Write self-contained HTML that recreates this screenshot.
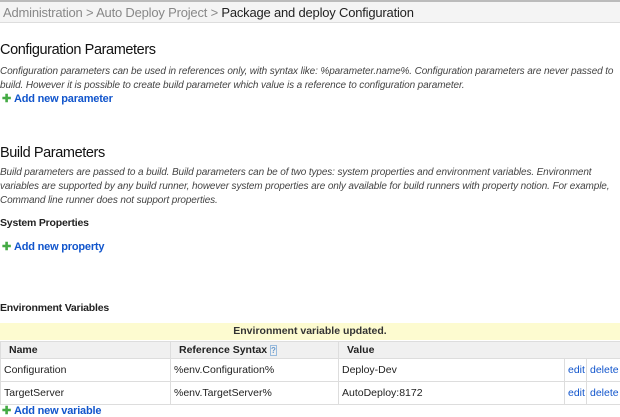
<!DOCTYPE html>
<html><head><style>
body{margin:0;width:620px;height:416px;overflow:hidden;background:#fff;font-family:"Liberation Sans",Arial,sans-serif;color:#222;position:relative}
.a{position:absolute;white-space:nowrap}
.bc{left:0;top:0;width:620px;height:23px;background:#f4f4f4;border-top:2px solid #bbb;border-bottom:1px solid #ddd;box-sizing:border-box}
.h{font-size:14.5px;letter-spacing:-0.4px;color:#111}
.i{font-size:10px;font-style:italic;color:#444;letter-spacing:-0.12px}
.add{font-size:11px;font-weight:bold;color:#1155cc;letter-spacing:-0.2px}
.add b{display:inline-block;color:#4a4;font-size:11px;margin-right:4px;width:8px}
.s{font-size:10.5px;font-weight:bold;color:#222;letter-spacing:-0.2px}
table{position:absolute;left:0;top:341px;width:620px;border-collapse:collapse;font-size:10.5px;table-layout:fixed}
td{border:1px solid #ddd;padding:0 3px;height:22px;overflow:hidden;white-space:nowrap}
tr.hd td{background:#f0f0f0;font-weight:bold;height:16px;padding-left:8px}
.l{color:#1155cc}
</style></head><body>
<div class="a bc"></div>
<div class="a" style="left:3px;top:5px;font-size:13px;letter-spacing:-0.2px;color:#888">Administration &gt; Auto Deploy Project &gt; <span style="color:#222">Package and deploy Configuration</span></div>
<div class="a h" style="left:0;top:42px">Configuration Parameters</div>
<div class="a i" style="left:0;top:66px">Configuration parameters can be used in references only, with syntax like: %parameter.name%. Configuration parameters are never passed to</div>
<div class="a i" style="left:0;top:80px">build. However it is possible to create build parameter which value is a reference to configuration parameter.</div>
<div class="a add" style="left:2px;top:92px"><b>✚</b>Add new parameter</div>
<div class="a h" style="left:0;top:145px">Build Parameters</div>
<div class="a i" style="left:0;top:167px">Build parameters are passed to a build. Build parameters can be of two types: system properties and environment variables. Environment</div>
<div class="a i" style="left:0;top:181px">variables are supported by any build runner, however system properties are only available for build runners with property notion. For example,</div>
<div class="a i" style="left:0;top:195px">Command line runner does not support properties.</div>
<div class="a s" style="left:0;top:217px">System Properties</div>
<div class="a add" style="left:2px;top:240px"><b>✚</b>Add new property</div>
<div class="a s" style="left:0;top:302px">Environment Variables</div>
<div class="a" style="left:0;top:323px;width:620px;height:17px;background:#fdfbd0;text-align:center;font-size:10.5px;font-weight:bold;line-height:17px;color:#333">Environment variable updated.</div>
<table>
<colgroup><col style="width:170px"><col style="width:168px"><col style="width:226px"><col style="width:22px"><col style="width:34px"></colgroup>
<tr class="hd"><td>Name</td><td>Reference Syntax <span style="color:#69c;font-size:8px;border:1px solid #9bd">?</span></td><td colspan="3">Value</td></tr>
<tr><td>Configuration</td><td>%env.Configuration%</td><td>Deploy-Dev</td><td class="l">edit</td><td class="l">delete</td></tr>
<tr><td>TargetServer</td><td>%env.TargetServer%</td><td>AutoDeploy:8172</td><td class="l">edit</td><td class="l">delete</td></tr>
</table>
<div class="a add" style="left:2px;top:404px"><b>✚</b>Add new variable</div>
</body></html>
